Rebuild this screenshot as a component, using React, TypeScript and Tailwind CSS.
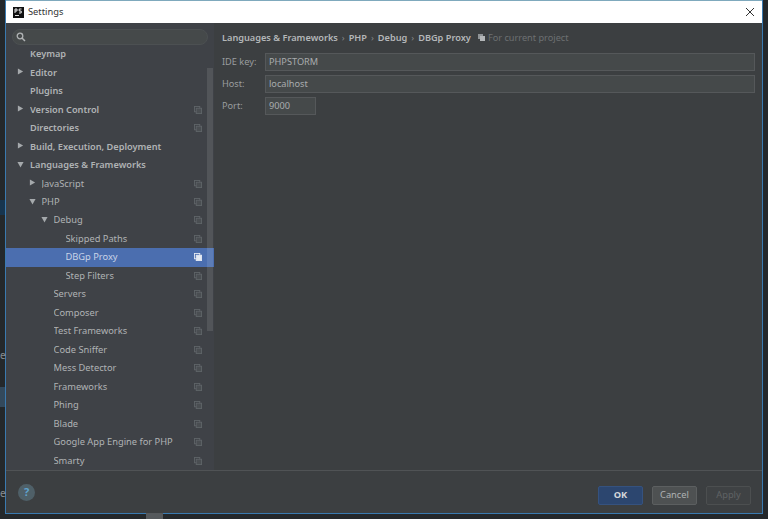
import React from "react";

const font = { fontFamily: '"Noto Sans", "Liberation Sans", sans-serif' };

type Row = { label: string; indent: number; arrow?: "r" | "d"; bold?: boolean; icon?: boolean; selected?: boolean };

const rows: Row[] = [
  { label: "Keymap", indent: 30, bold: true },
  { label: "Editor", indent: 30, arrow: "r", bold: true },
  { label: "Plugins", indent: 30, bold: true },
  { label: "Version Control", indent: 30, arrow: "r", bold: true, icon: true },
  { label: "Directories", indent: 30, bold: true, icon: true },
  { label: "Build, Execution, Deployment", indent: 30, arrow: "r", bold: true },
  { label: "Languages & Frameworks", indent: 30, arrow: "d", bold: true },
  { label: "JavaScript", indent: 41.5, arrow: "r", icon: true },
  { label: "PHP", indent: 41.5, arrow: "d", icon: true },
  { label: "Debug", indent: 53.5, arrow: "d", icon: true },
  { label: "Skipped Paths", indent: 65.5, icon: true },
  { label: "DBGp Proxy", indent: 65.5, icon: true, selected: true },
  { label: "Step Filters", indent: 65.5, icon: true },
  { label: "Servers", indent: 53.5, icon: true },
  { label: "Composer", indent: 53.5, icon: true },
  { label: "Test Frameworks", indent: 53.5, icon: true },
  { label: "Code Sniffer", indent: 53.5, icon: true },
  { label: "Mess Detector", indent: 53.5, icon: true },
  { label: "Frameworks", indent: 53.5, icon: true },
  { label: "Phing", indent: 53.5, icon: true },
  { label: "Blade", indent: 53.5, icon: true },
  { label: "Google App Engine for PHP", indent: 53.5, icon: true },
  { label: "Smarty", indent: 53.5, icon: true },
];

function CopyIcon({ selected }: { selected?: boolean }) {
  const c = selected ? "#e4e9f2" : "#5f6468";
  return (
    <svg width="8" height="8" viewBox="0 0 9 9" className="shrink-0">
      <rect x="0.5" y="0.5" width="6" height="6" fill="none" stroke={c} />
      <rect x="2.500" y="2.500" width="6" height="6" fill={selected ? c : "#4a4e52"} stroke={c} />
    </svg>
  );
}

function Arrow({ dir }: { dir: "r" | "d" }) {
  return (
    <svg width="7" height="7" viewBox="0 0 8 8" className="shrink-0">
      {dir === "r" ? <path d="M1 0.5 L7 4 L1 7.500 Z" fill="#a5a9ac" /> : <path d="M0.500 1 L7.500 1 L4 7.500 Z" fill="#a5a9ac" />}
    </svg>
  );
}

function TreeRow({ row }: { row: Row }) {
  return (
    <div
      className={`relative flex h-[18.48px] shrink-0 items-center pr-[12px] ${row.selected ? "bg-[#4b6eaf] text-[#c9d4e8]" : "text-[#b0b3b5]"} ${row.bold ? "text-[9.2px] font-semibold" : "text-[9.3px]"}`}
      style={{ paddingLeft: row.indent - 6 }}
    >
      {row.arrow && (
        <span className="absolute top-[5px] flex" style={{ left: row.indent - 19 }}>
          <Arrow dir={row.arrow} />
        </span>
      )}
      <span className="flex-1 truncate">{row.label}</span>
      {row.icon && <CopyIcon selected={row.selected} />}
    </div>
  );
}

function Field({ label, value, short }: { label: string; value: string; short?: boolean }) {
  return (
    <div className="flex h-[22px] items-center">
      <span className="w-[43px] shrink-0 text-[9.2px] text-[#9a9d9f]">{label}</span>
      <div
        className={`flex h-[18px] items-center border border-[#55585a] bg-[#45494a] pl-[3px] text-[9.2px] text-[#a9acae] ${short ? "w-[51px]" : "flex-1"}`}
      >
        {value}
      </div>
    </div>
  );
}

function Btn({ children, kind }: { children: React.ReactNode; kind: "ok" | "cancel" | "apply" }) {
  const cls =
    kind === "ok"
      ? "bg-[#2c466f] border-[#35527f] text-[#d5d8dc] font-bold"
      : kind === "cancel"
        ? "bg-[#4e5152] border-[#5c5f60] text-[#aeb1b3]"
        : "bg-[#3f4244] border-[#4c4f50] text-[#5f6264]";
  return <div className={`flex h-[19px] w-[45px] items-center justify-center rounded-[2px] border text-[9.3px] ${cls}`}>{children}</div>;
}

export default function App() {
  return (
    <div className="relative h-[519px] w-[768px] overflow-hidden bg-[#24282b]" style={font}>
      <div className="absolute left-0 top-[200px] h-[15px] w-[5px] bg-[#17354f]" />
      <div className="absolute bottom-0 left-[146px] h-[6px] w-[17px] bg-[#55595c]" />
      <div className="absolute left-0 top-[349px] text-[10px] leading-[12px] text-[#8a8d8f]">e</div>
      <div className="absolute left-0 top-[387px] h-[20px] w-[5px] bg-[#33495c]" />
      <div className="absolute left-0 top-[487px] text-[10px] leading-[12px] text-[#8a8d8f]">e</div>

      <div className="ml-[5px] flex h-[514px] w-[758px] flex-col border border-t-0 border-[#3a7ab0] bg-[#3c3f41]">
        <div className="h-px bg-[#7fa9bd]" />
        <div className="flex h-[22px] shrink-0 items-center bg-white pl-[7px] pr-[6px] text-[#333]">
          <svg width="11" height="11" viewBox="0 0 11 11" className="shrink-0">
            <rect width="11" height="11" fill="#111" />
            <rect x="2" y="8" width="4" height="1" fill="#ddd" />
            <path d="M2 6V2h2v2H2M6.200 2H8.500M6.200 2v2h2v2H6" stroke="#fff" fill="none" strokeWidth="0.9" />
          </svg>
          <span className="ml-[4px] flex-1 text-[9.3px]">Settings</span>
          <svg width="10" height="10" viewBox="0 0 10 10" className="mr-[1px]">
            <path d="M1 1L9 9M9 1L1 9" stroke="#333" strokeWidth="1" fill="none" />
          </svg>
        </div>

        <div className="flex min-h-0 flex-1">
          <div className="relative flex w-[208px] shrink-0 flex-col bg-[#3f4247]">
            <div className="flex h-[28px] shrink-0 items-start px-[6px] pt-[6px]">
              <div className="flex h-[16px] w-[196px] items-center rounded-full border border-[#4c5052] bg-[#45494a] pl-[3px]">
                <svg width="10" height="10" viewBox="0 0 10 10">
                  <circle cx="4" cy="4" r="2.800" fill="none" stroke="#b0b3b5" strokeWidth="1.300" />
                  <path d="M6 6L9 9" stroke="#b0b3b5" strokeWidth="1.500" />
                </svg>
              </div>
            </div>
            <div className="min-h-0 flex-1 overflow-hidden">
              <div className="-mt-[6px] flex flex-col">
                {rows.map((r) => (
                  <TreeRow key={r.label} row={r} />
                ))}
              </div>
            </div>
            <div className="absolute right-[1px] top-[45px] h-[263px] w-[6px] bg-white/10" />
          </div>

          <div className="flex min-w-0 flex-1 flex-col bg-[#3c3f41] pl-[8px] pr-[7px]">
            <div className="flex h-[27px] shrink-0 items-center pt-[2px] text-[9.2px] font-semibold text-[#b4b7b9]">
              <span>Languages &amp; Frameworks</span>
              <span className="mx-[4px] font-normal text-[#85888a]">›</span>
              <span>PHP</span>
              <span className="mx-[4px] font-normal text-[#85888a]">›</span>
              <span>Debug</span>
              <span className="mx-[4px] font-normal text-[#85888a]">›</span>
              <span>DBGp Proxy</span>
              <svg width="7" height="7" viewBox="0 0 7 7" className="ml-[7px]">
                <rect width="5" height="5" fill="#8f9396" />
                <rect x="2" y="2" width="5" height="5" fill="#b4b7b9" />
              </svg>
              <span className="ml-[3px] text-[9.2px] font-normal text-[#6d7072]">For current project</span>
            </div>
            <div className="mt-[1px] flex flex-col">
              <Field label="IDE key:" value="PHPSTORM" />
              <Field label="Host:" value="localhost" />
              <Field label="Port:" value="9000" short />
            </div>
          </div>
        </div>

        <div className="flex h-[43px] shrink-0 items-center justify-between border-t border-[#505355] bg-[#3c3f41] pl-[12px] pr-[11px]">
          <div className="flex h-[17px] w-[17px] items-center justify-center rounded-full bg-[#4f6068] text-[11px] font-bold text-[#5fa3cc]">?</div>
          <div className="mt-[6px] flex gap-[9px]">
            <Btn kind="ok">OK</Btn>
            <Btn kind="cancel">Cancel</Btn>
            <Btn kind="apply">Apply</Btn>
          </div>
        </div>
      </div>
    </div>
  );
}
